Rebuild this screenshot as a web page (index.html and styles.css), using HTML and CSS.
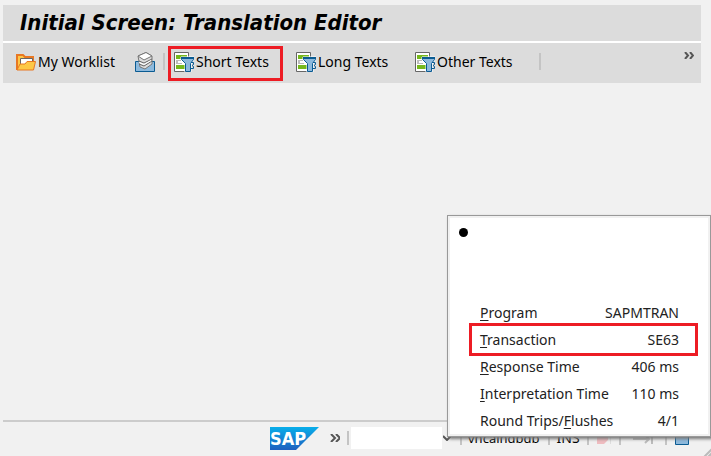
FILE: index.html
```html
<!DOCTYPE html>
<html lang="en">
<head>
<meta charset="utf-8">
<title>Initial Screen: Translation Editor</title>
<link rel="stylesheet" href="styles.css">
</head>
<body>
<svg class="defs" aria-hidden="true">
  <symbol id="filter" viewBox="0 0 20 20">
    <path d="M.5.5H14.5V19.5H.5Z" fill="#fff" stroke="#666"/>
    <path d="M2 3H13V7H2ZM2 13H11V17H2Z" fill="#76b81c"/>
    <path d="M2 8H8V9H4V11H8V12H2Z" fill="#bbb"/>
    <path d="M7 5H20V8L17 12V20H11V12L7 8Z" fill="#fff" stroke="#fff"/>
    <path d="M7.500 5.500H19.500V7.500L16.500 11.500V19.500H11.500V11.500L7.500 7.500Z" fill="#8db9dc" stroke="#0a5b92"/>
    <path d="M7 6H20" stroke="#0a5b92" stroke-width="2"/>
    <path d="M17 10.500H19.500V12.500L18 13.500L19.500 14.500V16.500H17" fill="none" stroke="#0a5b92"/>
  </symbol>
</svg>
<header class="title-bar"><h1>Initial Screen: Translation Editor</h1></header>
<nav class="toolbar">
  <button class="tool worklist"><svg class="icon" viewBox="0 0 20 20">
    <path d="M1 18V3H7L9 5H17V9" fill="#fdc847" stroke="#e87722" stroke-width="2"/>
    <path d="M4.500 6.500H16.500V13H4.500Z" fill="#fff" stroke="#666"/>
    <path d="M1 18L4 12H9L11 9.500H19.500L17.500 18Z" fill="#fdc847" stroke="#e87722"/>
  </svg>My Worklist</button>
  <button class="tool mail" aria-label="Inbox"><svg class="icon" viewBox="0 0 20 20">
    <path d="M.5 9.500H19.500V19.500H.5Z" fill="#8db9dc" stroke="#0a5b92"/>
    <path d="M3 4L11 .5L17 4V12L10 17L5 15Z" fill="#ddd" stroke="#777"/>
    <path d="M4 12L9 14L17 9M4 9L9 11L17 7" fill="none" stroke="#666"/>
    <path d="M4 10.500L9 12.500L16 8.500" fill="none" stroke="#fff"/>
    <path d="M3 4L11 .5L17 4L9 8Z" fill="#fff" stroke="#777"/>
  </svg></button>
  <span class="rule"></span>
  <button class="tool marked"><svg class="icon"><use href="#filter"/></svg>Short Texts</button>
  <button class="tool long"><svg class="icon"><use href="#filter"/></svg>Long Texts</button>
  <button class="tool other"><svg class="icon"><use href="#filter"/></svg>Other Texts</button>
  <span class="rule"></span>
  <button class="more" aria-label="More"><svg viewBox="0 0 10 7"><path d="M1 0L4 3.500L1 7M6 0L9 3.500L6 7"/></svg></button>
</nav>
<main></main>
<footer class="status">
  <svg class="logo" viewBox="0 0 49 23" role="img" aria-label="SAP">
    <defs><linearGradient id="blue" x2="0" y2="1"><stop stop-color="#08aeea"/><stop offset="1" stop-color="#1f5fbf"/></linearGradient></defs>
    <path d="M0 0H49L26 23H0Z" fill="url(#blue)"/>
    <text x="0" y="18">SAP</text>
  </svg>
  <button class="expand" aria-label="Expand"><svg viewBox="0 0 10 8"><path d="M1 0L5 4L1 8M6 0L10 4L6 8"/></svg></button>
  <span class="rule"></span>
  <input class="field" aria-label="System field">
  <svg class="arrow" viewBox="0 0 8 6"><path d="M0 1L4 5L8 1"/></svg>
  <span class="rule"></span>
  <span class="server">vhcalhdbdb</span>
  <span class="rule"></span>
  <span class="mode">INS</span>
  <span class="rule"></span>
  <svg class="state" viewBox="0 0 14 14"><path d="M0 6L6 1H11V9L7 13H0Z" fill="#efbcc0"/><path d="M13.500 2V13" stroke="#ddd"/></svg>
  <span class="rule"></span>
  <svg class="state wide" viewBox="0 0 20 14"><path d="M0 8H16M12 4L16 8L12 12M19 3V13" fill="none" stroke="#bbb" stroke-width="2"/></svg>
  <span class="rule"></span>
  <svg class="state" viewBox="0 0 14 14"><path d="M.5 .5H13.500V13.500H.5Z" fill="#8db9dc" stroke="#0a5b92"/></svg>
  <svg class="grip" viewBox="0 0 8 8"><path d="M1 9L9 1M5 9L9 5"/></svg>
</footer>
<div class="menu">
  <span class="dot"></span>
  <button class="item"><span><u>P</u>rogram</span><span>SAPMTRAN</span></button>
  <button class="item marked"><span><u>T</u>ransaction</span><span>SE63</span></button>
  <button class="item"><span><u>R</u>esponse Time</span><span>406 ms</span></button>
  <button class="item"><span><u>I</u>nterpretation Time</span><span>110 ms</span></button>
  <button class="item"><span>Round Trips/<u>F</u>lushes</span><span>4/1</span></button>
</div>
</body>
</html>
```
FILE: styles.css
```css
* { box-sizing: border-box; }
body {
  margin: 0;
  min-height: 100vh;
  display: flex;
  flex-direction: column;
  position: relative;
  padding: 5px 10px 0 3px;
  background: #f1f1f1;
  color: #000;
  font: 14px/20px "Noto Sans", sans-serif;
}
.defs { position: absolute; width: 0; height: 0; }
button { border: 0; padding: 0; background: none; color: inherit; font: inherit; }
.title-bar { padding: 0 17px; background: #dcdcdc; border-bottom: 2px solid #fff; }
h1 { margin: 0; font: italic bold 22px/36px "DejaVu Sans Condensed", "DejaVu Sans", sans-serif; }
.toolbar { display: flex; align-items: flex-start; height: 40px; padding: 6px 7px 0 13px; background: #dcdcdc; }
.tool { display: flex; align-items: center; gap: 2px; height: 29px; padding-bottom: 4px; white-space: nowrap; }
.icon { width: 20px; height: 20px; flex: none; }
.worklist, .long { width: 119px; }
.mail { margin-right: 8px; }
.rule { flex: none; width: 2px; height: 17px; background: #c4c4c4; }
.toolbar .rule { margin-top: 4px; }
.marked { outline: 3px solid #ed1c24; }
.tool.marked { width: 109px; margin: 0 16px 0 6px; padding-left: 3px; }
.other { width: 124px; }
.more { margin: 3px 0 0 auto; }
.more svg { display: block; width: 10px; height: 7px; }
.more path, .expand path, .arrow path { fill: none; stroke: #555; stroke-width: 2; }
main { flex: 1; }
.status {
  display: flex;
  align-items: center;
  height: 36px;
  padding: 0 0 2px 267px;
  border-top: 2px solid #ccc;
  white-space: nowrap;
}
.status .rule { height: 14px; }
.logo { width: 49px; height: 23px; flex: none; }
.logo text { fill: #fff; font: bold 18px "DejaVu Sans Condensed", sans-serif; }
.expand { margin: 0 7px 0 11px; }
.expand svg { display: block; width: 10px; height: 8px; }
.field { width: 91px; height: 22px; margin-left: 2px; border: 0; background: #fff; }
.arrow { width: 8px; height: 6px; margin: 0 9px 0 1px; flex: none; }
.server { margin: 0 8px 0 6px; font-size: 13px; }
.mode { margin: 0 7px; }
.state { width: 14px; height: 14px; margin: 0 8px; flex: none; }
.wide { width: 20px; margin: 0 12px; }
.grip {
  position: absolute;
  right: 0;
  bottom: 0;
  width: 8px;
  height: 8px;
  stroke: #bbb;
  stroke-width: 2;
}
.menu {
  position: absolute;
  right: 0;
  bottom: 19px;
  width: 264px;
  padding: 2px;
  border: 1px solid #999;
  background: #fff;
  box-shadow: inset 0 0 0 2px #f1f1f1, 2px 2px 3px #777;
  color: #222;
}
.dot { display: block; width: 9px; height: 9px; margin: 10px 0 62px 9px; border-radius: 50%; background: #000; }
.item {
  display: flex;
  align-items: center;
  justify-content: space-between;
  width: 223px;
  height: 27px;
  margin-left: 22px;
  padding: 1px 16px 0 8px;
}
u { text-underline-offset: 2px; }
```
